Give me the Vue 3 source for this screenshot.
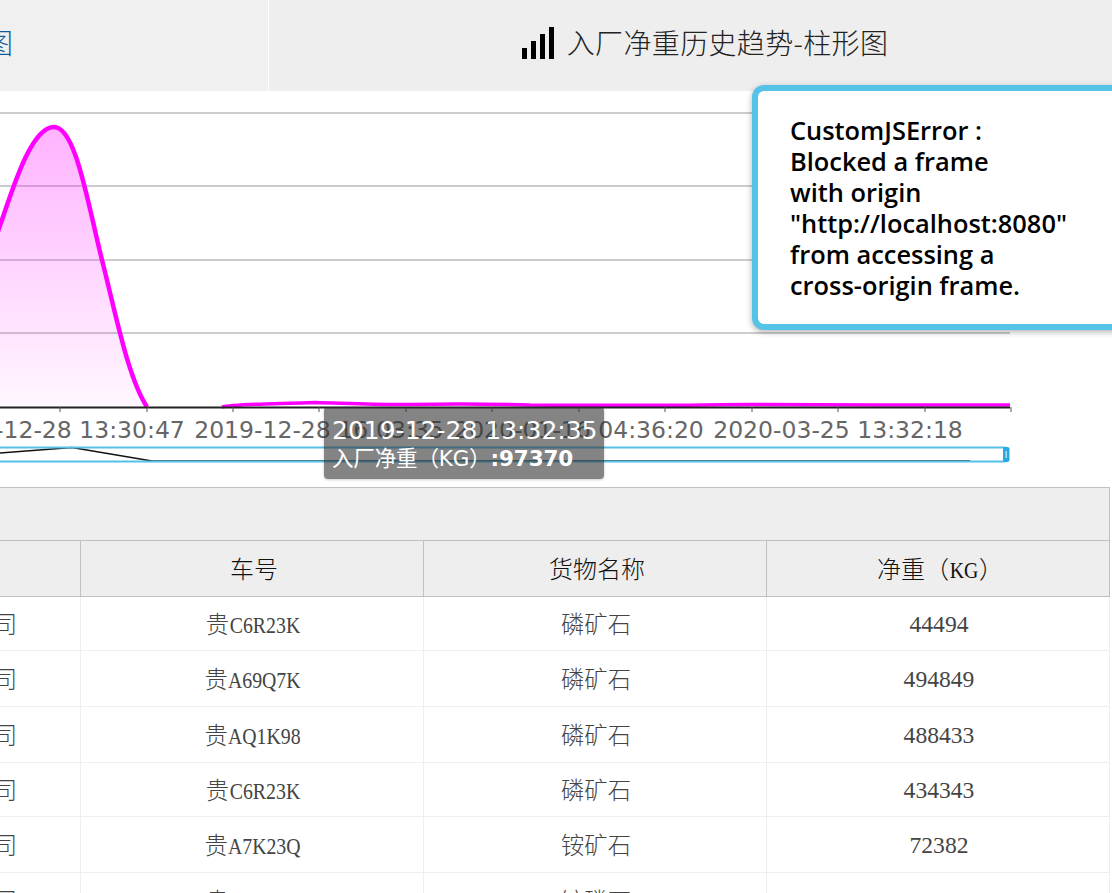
<template>
  <div class="page">
    <!-- tabs -->
    <div class="tabs">
      <div class="tab tab-left">
        <svg class="bars" width="32" height="32" viewBox="0 0 32 32">
          <rect x="0" y="21" width="5" height="11" />
          <rect x="9" y="14" width="5" height="18" />
          <rect x="18" y="7" width="5" height="25" />
          <rect x="27" y="0" width="5" height="32" />
        </svg>
        <span class="tab-title left-title">入厂净重历史趋势-折线图</span>
      </div>
      <div class="tab tab-right">
        <svg class="bars" width="32" height="32" viewBox="0 0 32 32">
          <rect x="0" y="21" width="5" height="11" />
          <rect x="9" y="14" width="5" height="18" />
          <rect x="18" y="7" width="5" height="25" />
          <rect x="27" y="0" width="5" height="32" />
        </svg>
        <span class="tab-title">入厂净重历史趋势-柱形图</span>
      </div>
    </div>

    <!-- chart -->
    <div class="chart">
      <svg class="chart-svg" width="1112" height="396" viewBox="0 91 1112 396">
        <defs>
          <linearGradient id="areaFill" x1="0" y1="0" x2="0" y2="1">
            <stop offset="0" stop-color="#ff00ff" stop-opacity="0.3" />
            <stop offset="1" stop-color="#ff00ff" stop-opacity="0.03" />
          </linearGradient>
        </defs>
        <line v-for="y in gridLines" :key="y" x1="0" x2="1010" :y1="y" :y2="y" class="grid" />
        <path :d="curve + ' L147,407 L-12,407 Z'" fill="url(#areaFill)" />
        <path :d="curve" class="line" />
        <path d="M222,407 C232,404 270,404 315,402.5 C350,403.5 380,405 410,404.5 C450,403.5 480,403.5 530,405 C600,405.5 680,405.5 750,404.5 C800,404.5 840,405 880,405 L1010,405" class="line thin" />
        <line x1="0" x2="1010" y1="407.5" y2="407.5" class="axis" />
        <line v-for="x in ticks" :key="x" :x1="x" :x2="x" y1="407" y2="412" class="tick" />
        <text v-for="l in axisLabels" :key="l.x" :x="l.x" y="438" class="axis-label">{{ l.text }}</text>
        <!-- range slider -->
        <path d="M-5,453.5 L72,447.5 L152,461 L970,461" class="mini" />
        <path d="M-5,447.5 H1004.5 V461.5 H-5" class="slider" />
        <rect x="1003" y="447" width="6.5" height="15" rx="2" fill="#29a9e1" />
        <rect x="1005.5" y="451" width="1.5" height="7" fill="#a8dcf2" />
      </svg>

      <div class="tooltip">
        <div class="tip-time">2019-12-28 13:32:35</div>
        <div class="tip-value">入厂净重（KG）<b>:97370</b></div>
      </div>

      <div class="error-card">
        CustomJSError :<br />
        Blocked a frame<br />
        with origin<br />
        "http://localhost:8080"<br />
        from accessing a<br />
        cross-origin frame.
      </div>
    </div>

    <!-- table -->
    <table class="data-table">
      <thead>
        <tr class="title-row"><th colspan="4"></th></tr>
        <tr class="head-row">
          <th v-for="h in headers" :key="h">
            <span v-for="(r, i) in splitRuns(h)" :key="i" :class="r.type">{{ r.text }}</span>
          </th>
        </tr>
      </thead>
      <tbody>
        <tr v-for="(row, idx) in rows" :key="idx">
          <td v-for="(cell, c) in row" :key="c">
            <span v-for="(r, i) in splitRuns(cell)" :key="i" :class="r.type">{{ r.text }}</span>
          </td>
        </tr>
      </tbody>
    </table>
  </div>
</template>

<script setup>
const gridLines = [113, 186, 260, 333]
const ticks = [60, 147, 233, 319, 406, 492, 579, 665, 752, 838, 925, 1011]
const curve = 'M-12,256 C2,232 24,127 54,127 C76,127 88,205 102,260 C116,315 128,378 147,407'

const axisLabels = [
  { x: 60, text: '2019-12-28 13:30:47' },
  { x: 319, text: '2019-12-28 16:03:35' },
  { x: 579, text: '2020-01-16 04:36:20' },
  { x: 838, text: '2020-03-25 13:32:18' }
]

const headers = ['运输单位', '车号', '货物名称', '净重（KG）']
const company = '贵州开磷物流分公司'
const rows = [
  [company, '贵C6R23K', '磷矿石', '44494'],
  [company, '贵A69Q7K', '磷矿石', '494849'],
  [company, '贵AQ1K98', '磷矿石', '488433'],
  [company, '贵C6R23K', '磷矿石', '434343'],
  [company, '贵A7K23Q', '铵矿石', '72382'],
  [company, '贵C6R23K', '铵磷石', '2476476']
]

// the reference uses a song face with half-width latin, so runs get their own size
function splitRuns(text) {
  return text
    .split(/([\u4e00-\u9fff（）]+)/)
    .filter(Boolean)
    .map((t) => {
      if (/[\u4e00-\u9fff（）]/.test(t)) return { text: t, type: 'cn' }
      return { text: t, type: /[A-Z]/.test(t) ? 'plate' : 'num' }
    })
}
</script>

<style scoped>
.page {
  width: 1112px;
  height: 893px;
  overflow: hidden;
  background: #fff;
}
.tabs {
  display: flex;
  height: 91px;
}
.tab {
  flex: none;
  width: 872px;
  box-sizing: border-box;
  display: flex;
  align-items: center;
  justify-content: center;
  gap: 13px;
  background: #eee;
  padding-bottom: 7px;
}
.tab-left {
  margin-left: -603px;
  background: #f0f0f0;
  border-right: 1px solid #fff;
  padding-right: 5px;
}
.bars {
  fill: #000;
  flex: none;
  margin-top: 1px;
}
.tab-title {
  font-family: "Noto Sans CJK SC", sans-serif;
  font-size: 28px;
  font-weight: 300;
  letter-spacing: 0.35px;
  color: #222;
  white-space: nowrap;
}
.left-title {
  color: #0f5c9c;
}

.chart {
  position: relative;
  height: 396px;
}
.chart-svg {
  display: block;
}
.grid {
  stroke: #ccc;
  stroke-width: 2;
}
.line {
  fill: none;
  stroke: #ff00ff;
  stroke-width: 4.5;
}
.line.thin {
  stroke-width: 3.5;
}
.axis {
  stroke: #222;
  stroke-width: 2;
}
.tick {
  stroke: #555;
  stroke-width: 1;
}
.axis-label {
  font-family: "DejaVu Sans", sans-serif;
  font-size: 23.5px;
  fill: #666;
  text-anchor: middle;
}
.mini {
  fill: none;
  stroke: #111;
  stroke-width: 1.5;
}
.slider {
  fill: none;
  stroke: #55c0e8;
  stroke-width: 2;
}

.tooltip {
  position: absolute;
  left: 324px;
  top: 316px;
  width: 280px;
  height: 72px;
  box-sizing: border-box;
  padding: 9px 8px 0;
  border-radius: 4px;
  background: rgba(50, 50, 50, 0.6);
  box-shadow: 0 1px 3px rgba(0, 0, 0, 0.2);
  color: #fff;
  font-family: "DejaVu Sans", "Noto Sans CJK SC", sans-serif;
  white-space: nowrap;
}
.tip-time {
  font-size: 25px;
  line-height: 29px;
}
.tip-value {
  font-size: 21.5px;
  line-height: 27px;
  letter-spacing: -0.15px;
}

.error-card {
  position: absolute;
  left: 752px;
  top: -6px;
  width: 400px;
  height: 245px;
  box-sizing: border-box;
  padding: 24px 32px;
  border: 6px solid #55c3e7;
  border-radius: 12px;
  background: #fff;
  box-shadow: 0 2px 6px rgba(0, 0, 0, 0.3);
  font-family: "Open Sans", sans-serif;
  font-size: 25.4px;
  font-weight: 600;
  line-height: 31px;
  color: #000;
  white-space: nowrap;
}

.data-table {
  margin-left: -263px;
  width: 1373px;
  table-layout: fixed;
  border-collapse: collapse;
  font-family: "Liberation Serif", serif;
  font-size: 23.6px;
  color: #444;
}
.cn {
  font-family: "Noto Sans CJK SC", sans-serif;
  font-size: 23.4px;
  font-weight: 300;
}
.plate {
  display: inline-block;
  margin: 0 -6.5px;
  transform: scaleX(0.84);
}
.data-table th {
  background: #eee;
  border: 1px solid #c0c0c0;
  font-weight: normal;
  color: #111;
  padding: 0 0 3px 4px;
}
.data-table th .cn {
  font-size: 24px;
}
.data-table th .plate {
  margin: 0 -2px;
}
.title-row {
  height: 53px;
}
.head-row {
  height: 56px;
}
.data-table td {
  border: 1px solid #eee;
  border-top: 0;
  text-align: center;
  padding: 0 0 2px 2px;
}
.data-table td:first-child {
  padding-left: 6px;
}
.data-table td:last-child {
  padding: 2px 0 0 2px;
}
tbody tr {
  height: 56px;
}
tbody tr:nth-child(3n + 1) {
  height: 54px;
}
</style>

<style>
html,
body {
  margin: 0;
  overflow: hidden;
}
</style>
